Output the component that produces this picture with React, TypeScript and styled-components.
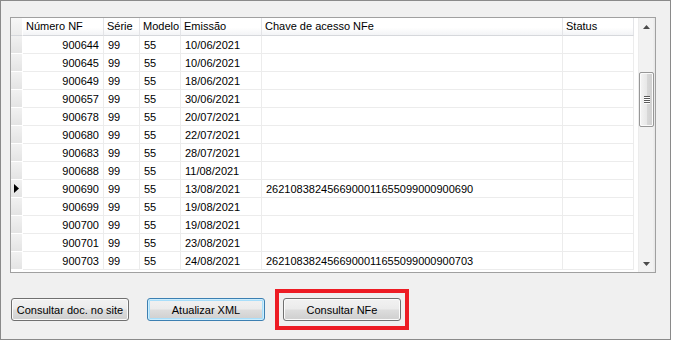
import React from "react";
import styled, { createGlobalStyle, css } from "styled-components";

const GlobalStyle = createGlobalStyle`
  html, body { margin: 0; padding: 0; background: #ffffff; }
  body { font-family: "Liberation Sans", Arial, sans-serif; font-size: 11px; color: #000; }
`;

const Frame = styled.div`
  width: 671px;
  height: 340px;
  box-sizing: border-box;
  border: 1px solid #8a8a8a;
  background: #f0f0f0;
  padding: 16px 15px 0 9px;
  display: flex;
  flex-direction: column;
`;

const Grid = styled.div`
  width: 646px;
  height: 256px;
  box-sizing: border-box;
  border: 1px solid #a0a0a0;
  background: #ffffff;
  display: flex;
`;

const Table = styled.div`
  flex: 1;
  display: flex;
  flex-direction: column;
  overflow: hidden;
`;

const COLS = "12px 81px 36px 41px 81px 301px 71px";

const Row = styled.div`
  display: grid;
  grid-template-columns: ${COLS};
  height: 18px;
  flex: none;
`;

const HeaderCell = styled.div`
  box-sizing: border-box;
  height: 18px;
  padding: 0 3px;
  line-height: 17px;
  white-space: nowrap;
  overflow: hidden;
  background: linear-gradient(#ffffff 0%, #ffffff 55%, #f3f4f6 100%);
  border-right: 1px solid #e3e4e7;
  border-bottom: 1px solid #d6d8dc;
`;

const CornerCell = styled.div`
  box-sizing: border-box;
  height: 18px;
  background: linear-gradient(#f7f7f7, #ececec);
  border-right: 1px solid #ffffff;
  border-bottom: 1px solid #d6d8dc;
`;

const RowHeadCell = styled.div`
  box-sizing: border-box;
  height: 18px;
  background: linear-gradient(#f1f1f1, #e4e4e4);
  border-right: 1px solid #ffffff;
  border-bottom: 1px solid #ffffff;
  display: flex;
  align-items: center;
  padding-left: 3px;
`;

const Cell = styled.div<{ $right?: boolean }>`
  box-sizing: border-box;
  height: 18px;
  padding: 0 4px;
  line-height: 18px;
  white-space: nowrap;
  overflow: hidden;
  border-right: 1px solid #ececec;
  border-bottom: 1px solid #ececec;
  ${(p) =>
    p.$right &&
    css`
      text-align: right;
    `}
`;

const ScrollBar = styled.div`
  width: 17px;
  flex: none;
  display: flex;
  flex-direction: column;
  background: linear-gradient(to right, #e6e6e6 0px, #f2f2f2 1px, #f2f2f2 15px, #e9e9e9 16px);
`;

const ArrowButton = styled.div`
  height: 17px;
  flex: none;
  display: flex;
  align-items: center;
  justify-content: center;
`;

const Track = styled.div`
  flex: 1;
  display: flex;
  flex-direction: column;
  align-items: center;
`;

const Thumb = styled.div`
  width: 15px;
  height: 55px;
  box-sizing: border-box;
  border: 1px solid #979797;
  border-radius: 2px;
  background: linear-gradient(to right, #f4f4f4 0%, #e8e8e8 50%, #d9d9d9 51%, #cfcfcf 100%);
  box-shadow: inset 0 0 0 1px #fbfbfb;
  display: flex;
  flex-direction: column;
  align-items: center;
  justify-content: center;
  gap: 1px;
`;

const Grip = styled.span`
  display: block;
  width: 6px;
  height: 1px;
  background: #5a5a5a;
  box-shadow: 0 1px 0 #ffffff;
`;

const ButtonRow = styled.div`
  margin-top: 25px;
  padding-left: 1px;
  display: flex;
  align-items: center;
  gap: 18px;
`;

const Button = styled.button<{ $default?: boolean }>`
  width: 118px;
  height: 23px;
  box-sizing: border-box;
  margin: 0;
  padding: 0;
  border: 1px solid #707070;
  border-radius: 3px;
  font-family: "Liberation Sans", Arial, sans-serif;
  font-size: 11px;
  color: #000;
  background: linear-gradient(#f2f2f2 0%, #ebebeb 48%, #dddddd 52%, #cfcfcf 100%);
  box-shadow: inset 0 0 0 1px #fbfbfb;
  ${(p) =>
    p.$default &&
    css`
      border-color: #3c7fb1;
      box-shadow: inset 0 0 0 1px #cdeefe, inset 0 0 0 2px #a8defa;
    `}
`;

const Highlight = styled.div`
  border: 4px solid #ed1c24;
  padding: 5px 4px;
  margin: -9px -8px;
  display: flex;
`;

const Pointer = () => (
  <svg width="5" height="9" viewBox="0 0 5 9">
    <path d="M0 0 L5 4.5 L0 9 Z" fill="#000" />
  </svg>
);

const ArrowUp = () => (
  <svg width="7" height="4" viewBox="0 0 7 4">
    <path d="M3.5 0 L7 4 L0 4 Z" fill="#4a4a4a" />
  </svg>
);

const ArrowDown = () => (
  <svg width="7" height="4" viewBox="0 0 7 4">
    <path d="M0 0 L7 0 L3.5 4 Z" fill="#4a4a4a" />
  </svg>
);

type Rec = { nf: string; date: string; chave?: string; current?: boolean };

const rows: Rec[] = [
  { nf: "900644", date: "10/06/2021" },
  { nf: "900645", date: "10/06/2021" },
  { nf: "900649", date: "18/06/2021" },
  { nf: "900657", date: "30/06/2021" },
  { nf: "900678", date: "20/07/2021" },
  { nf: "900680", date: "22/07/2021" },
  { nf: "900683", date: "28/07/2021" },
  { nf: "900688", date: "11/08/2021" },
  { nf: "900690", date: "13/08/2021", chave: "2621083824566900011655099000900690", current: true },
  { nf: "900699", date: "19/08/2021" },
  { nf: "900700", date: "19/08/2021" },
  { nf: "900701", date: "23/08/2021" },
  { nf: "900703", date: "24/08/2021", chave: "2621083824566900011655099000900703" },
];

const headers = ["Número NF", "Série", "Modelo", "Emissão", "Chave de acesso NFe", "Status"];

export default function App() {
  return (
    <>
      <GlobalStyle />
      <Frame>
        <Grid>
          <Table>
            <Row>
              <CornerCell />
              {headers.map((h) => (
                <HeaderCell key={h}>{h}</HeaderCell>
              ))}
            </Row>
            {rows.map((r) => (
              <Row key={r.nf}>
                <RowHeadCell>{r.current && <Pointer />}</RowHeadCell>
                <Cell $right>{r.nf}</Cell>
                <Cell>99</Cell>
                <Cell>55</Cell>
                <Cell>{r.date}</Cell>
                <Cell>{r.chave ?? ""}</Cell>
                <Cell />
              </Row>
            ))}
          </Table>
          <ScrollBar>
            <ArrowButton>
              <ArrowUp />
            </ArrowButton>
            <Track>
              <div style={{ height: 37 }} />
              <Thumb>
                <Grip />
                <Grip />
                <Grip />
                <Grip />
              </Thumb>
            </Track>
            <ArrowButton>
              <ArrowDown />
            </ArrowButton>
          </ScrollBar>
        </Grid>
        <ButtonRow>
          <Button>Consultar doc. no site</Button>
          <Button $default>Atualizar XML</Button>
          <Highlight>
            <Button>Consultar NFe</Button>
          </Highlight>
        </ButtonRow>
      </Frame>
    </>
  );
}
